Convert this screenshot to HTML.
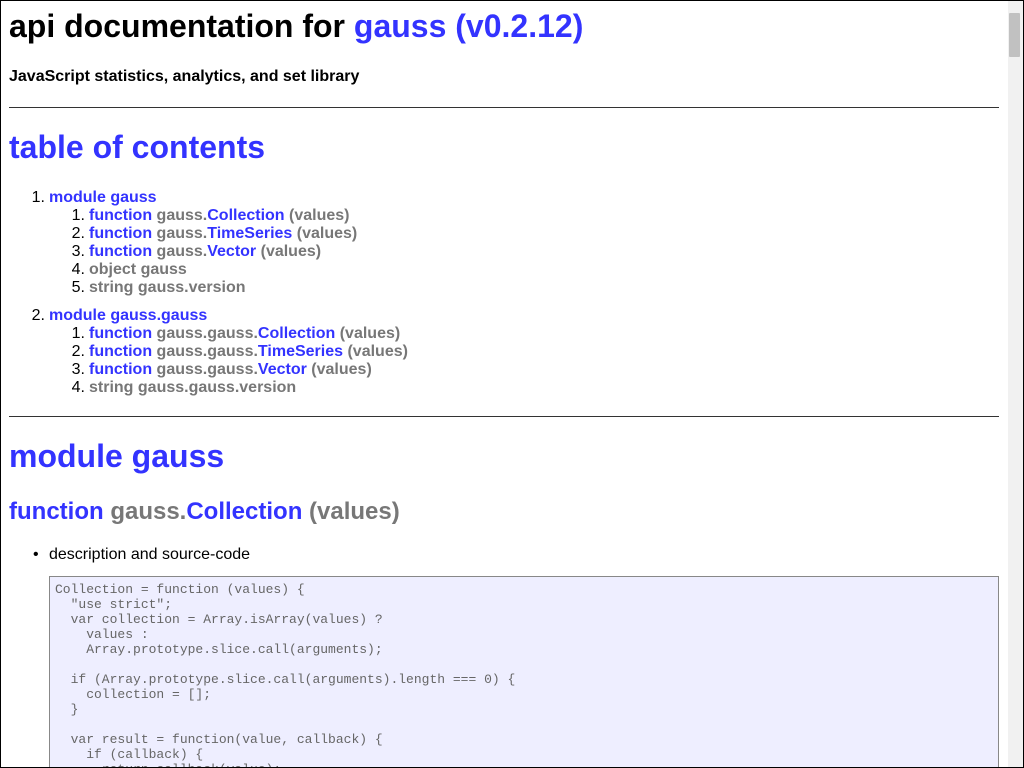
<!DOCTYPE html>
<html><head><meta charset="utf-8"><style>
html,body{margin:0;padding:0;background:#fff;overflow:hidden}
body{width:1024px;height:768px;position:relative;font-family:"Liberation Sans",sans-serif;color:#000}
.a{position:absolute;white-space:nowrap}
.b{color:#33f}
.g{color:#777}
h1,h2,h4{margin:0;font-weight:bold}
h1{font-size:32px;line-height:37px}
h2{font-size:24px;line-height:28px}
h4{font-size:16px;line-height:18px}
hr{position:absolute;left:9px;width:990px;margin:0;border:0;border-top:1px solid #333;height:0}
.l{font-size:16px;line-height:18px;font-weight:bold}
.n{display:inline-block;width:40px;text-align:right;padding-right:4px;box-sizing:border-box;font-weight:normal;color:#000}
pre{position:absolute;left:49px;top:576px;width:950px;height:220px;box-sizing:border-box;margin:0;border:1px solid #888;background:#eef;padding:5px;font-family:"Liberation Mono",monospace;font-size:13px;line-height:15px;color:#666}
.sb{position:absolute;right:1px;top:1px;width:15px;height:766px;background:#f1f1f1}
.th{position:absolute;right:3px;top:12px;width:11px;height:44px;background:#c1c1c1;border-radius:1px}
.fr{position:absolute;left:0;top:0;width:1022px;height:766px;border:1px solid #000;pointer-events:none}
</style></head><body>
<h1 class="a" style="left:9px;top:8px">api documentation for <span class="b">gauss (v0.2.12)</span></h1>
<h4 class="a" style="left:9px;top:68px">JavaScript statistics, analytics, and set library</h4>
<hr style="top:107px">
<h1 class="a b" style="left:9px;top:129px">table of contents</h1>
<div class="a l" style="left:9px;top:189px">
<div><span class="n">1.</span><span class="b">module gauss</span></div>
<div style="padding-left:40px">
<div><span class="n">1.</span><span class="b">function</span> <span class="g">gauss.</span><span class="b">Collection</span> <span class="g">(values)</span></div>
<div><span class="n">2.</span><span class="b">function</span> <span class="g">gauss.</span><span class="b">TimeSeries</span> <span class="g">(values)</span></div>
<div><span class="n">3.</span><span class="b">function</span> <span class="g">gauss.</span><span class="b">Vector</span> <span class="g">(values)</span></div>
<div><span class="n">4.</span><span class="g">object gauss</span></div>
<div><span class="n">5.</span><span class="g">string gauss.version</span></div>
</div>
<div style="margin-top:10px"><span class="n">2.</span><span class="b">module gauss.gauss</span></div>
<div style="padding-left:40px">
<div><span class="n">1.</span><span class="b">function</span> <span class="g">gauss.gauss.</span><span class="b">Collection</span> <span class="g">(values)</span></div>
<div><span class="n">2.</span><span class="b">function</span> <span class="g">gauss.gauss.</span><span class="b">TimeSeries</span> <span class="g">(values)</span></div>
<div><span class="n">3.</span><span class="b">function</span> <span class="g">gauss.gauss.</span><span class="b">Vector</span> <span class="g">(values)</span></div>
<div><span class="n">4.</span><span class="g">string gauss.gauss.version</span></div>
</div>
</div>
<hr style="top:416px">
<h1 class="a b" style="left:9px;top:438px">module gauss</h1>
<h2 class="a" style="left:9px;top:498px"><span class="b">function</span> <span class="g">gauss.</span><span class="b">Collection</span> <span class="g">(values)</span></h2>
<div class="a" style="left:33px;top:546px;font-size:16px;line-height:18px">•</div>
<div class="a" style="left:49px;top:546px;font-size:16px;line-height:18px">description and source-code</div>
<pre>Collection = function (values) {
  "use strict";
  var collection = Array.isArray(values) ?
    values :
    Array.prototype.slice.call(arguments);

  if (Array.prototype.slice.call(arguments).length === 0) {
    collection = [];
  }

  var result = function(value, callback) {
    if (callback) {
      return callback(value);
    }</pre>
<div class="sb"><div class="th"></div></div>
<div class="fr"></div>
</body></html>
